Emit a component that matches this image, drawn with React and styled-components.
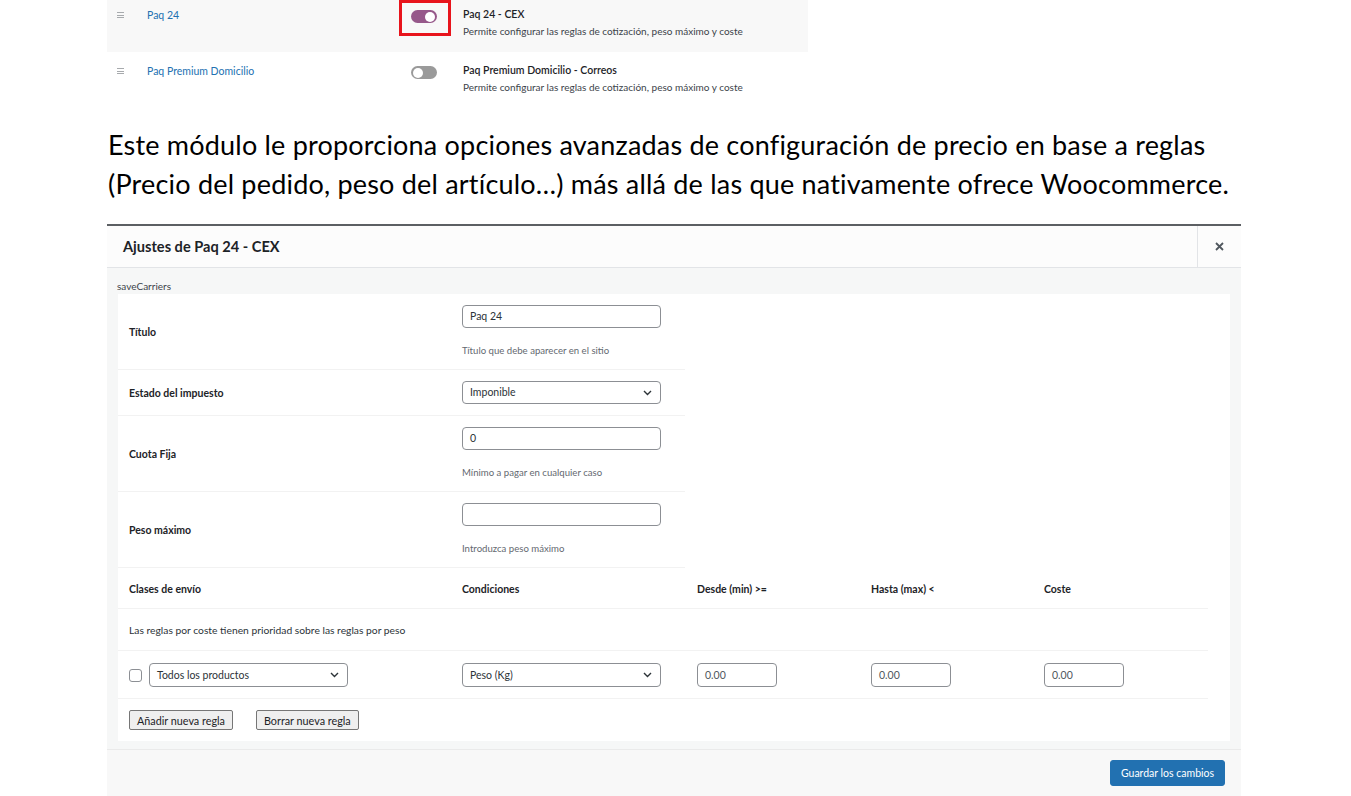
import React from "react";
import styled, { createGlobalStyle } from "styled-components";

const Global = createGlobalStyle`
  html, body { margin: 0; padding: 0; background: #ffffff; }
  body { font-family: Lato, "Open Sans", sans-serif; color: #1d2327; }
  * { box-sizing: border-box; }
`;

const Page = styled.div`
  width: 1351px;
  height: 796px;
  overflow: hidden;
  padding-left: 107px;
`;

const MethodList = styled.div`
  width: 701px;
  display: flex;
  flex-direction: column;
`;

const MethodRow = styled.div`
  display: grid;
  grid-template-columns: 40px 252px 64px 1fr;
  height: ${(p) => p.$h}px;
  background: ${(p) => (p.$alt ? "#f8f8f8" : "#ffffff")};
`;

const Handle = styled.div`
  display: flex;
  flex-direction: column;
  gap: 1.5px;
  padding: ${(p) => p.$pt}px 0 0 10px;
  span {
    display: block;
    width: 7px;
    height: 1px;
    background: #a7aaad;
  }
`;

const MethodLink = styled.a`
  font-size: 10.5px;
  color: #2271b1;
  text-decoration: none;
  line-height: 14px;
  padding-top: ${(p) => p.$pt}px;
`;

const ToggleCell = styled.div`
  position: relative;
  height: 36px;
`;

const Highlight = styled.div`
  position: absolute;
  left: 0;
  top: 0;
  width: 52px;
  height: 36px;
  border: 3px solid #e8141c;
`;

const Toggle = styled.div`
  position: absolute;
  left: 12px;
  top: ${(p) => p.$top}px;
  width: 26px;
  height: 13px;
  border-radius: 7px;
  background: ${(p) => (p.$on ? "#96588a" : "#9a9a9a")};
  &::after {
    content: "";
    position: absolute;
    top: 1.5px;
    ${(p) => (p.$on ? "right: 2px;" : "left: 1.5px;")}
    width: 10px;
    height: 10px;
    border-radius: 50%;
    background: #ffffff;
  }
`;

const MethodInfo = styled.div`
  display: flex;
  flex-direction: column;
  gap: 3px;
  padding-top: ${(p) => p.$pt}px;
`;

const MethodTitle = styled.div`
  font-size: 10.5px;
  font-weight: 600;
  color: #1d2327;
  line-height: 14px;
`;

const MethodDesc = styled.div`
  font-size: 10px;
  color: #3c434a;
  line-height: 14px;
`;

const Intro = styled.p`
  margin: 20px 0 0 1px;
  font-family: Lato, "Open Sans", sans-serif;
  font-size: 27px;
  line-height: 39px;
  color: #000000;
  letter-spacing: 0.2px;
  white-space: nowrap;
`;

const Modal = styled.div`
  margin-top: 21px;
  width: 1134px;
  border-top: 2px solid #5c5f63;
  background: #f6f7f7;
`;

const ModalHeader = styled.div`
  display: flex;
  height: 42px;
  background: #fcfcfc;
  border-bottom: 1px solid #e2e4e7;
`;

const ModalTitle = styled.h2`
  flex: 1;
  margin: 0;
  padding-left: 16px;
  font-size: 14.6px;
  font-weight: 700;
  line-height: 42px;
  color: #1d2327;
`;

const CloseButton = styled.div`
  width: 44px;
  border-left: 1px solid #e2e4e7;
  display: flex;
  align-items: center;
  justify-content: center;
`;

const ModalBody = styled.div`
  padding: 11px 11px 8px 11px;
`;

const FormName = styled.div`
  font-size: 10px;
  color: #3c434a;
  line-height: 15px;
  margin-left: -1px;
`;

const Panel = styled.div`
  background: #ffffff;
  display: flex;
  flex-direction: column;
`;

const FieldRow = styled.div`
  width: 567px;
  display: grid;
  grid-template-columns: 344px 1fr;
  border-bottom: 1px solid #f2f2f2;
`;

const FieldLabel = styled.div`
  display: flex;
  align-items: center;
  padding-left: 11px;
  font-size: 10.5px;
  font-weight: 700;
  color: #1d2327;
`;

const FieldControl = styled.div`
  padding: ${(p) => (p.$desc ? "11px 0 12px" : "11px 0 11px")};
`;

const TextInput = styled.div`
  width: ${(p) => p.$w || 199}px;
  height: ${(p) => p.$h || 23}px;
  border: 1px solid #8c8f94;
  border-radius: 4px;
  padding-left: 7px;
  font-size: 10.5px;
  line-height: ${(p) => (p.$h || 23) - 2}px;
  color: ${(p) => p.$c || "#2c3338"};
  background: #ffffff;
`;

const Select = styled(TextInput)`
  display: flex;
  align-items: center;
  justify-content: space-between;
  padding-right: 8px;
`;

const FieldDesc = styled.div`
  margin-top: 17px;
  font-size: 9.6px;
  line-height: 12px;
  color: #646970;
`;

const RulesGrid = styled.div`
  width: 1090px;
  display: grid;
  grid-template-columns: 344px 235px 174px 173px 164px;
`;

const RulesRow = styled.div`
  display: contents;
`;

const Cell = styled.div`
  height: ${(p) => p.$h}px;
  display: flex;
  align-items: center;
  gap: 7px;
  padding-left: ${(p) => (p.$first ? 11 : 0)}px;
  padding-top: ${(p) => p.$pt || 0}px;
  border-bottom: ${(p) => (p.$line ? "1px solid #f2f2f2" : "none")};
  grid-column: ${(p) => p.$span || "auto"};
`;

const HeadText = styled.span`
  font-size: 10.5px;
  font-weight: 700;
  color: #1d2327;
`;

const NoteText = styled.span`
  font-size: 10.3px;
  color: #2c3338;
`;

const Checkbox = styled.span`
  width: 13px;
  height: 13px;
  border: 1px solid #8c8f94;
  border-radius: 3px;
  background: #fff;
  flex-shrink: 0;
`;

const ButtonRow = styled.div`
  display: flex;
  gap: 23px;
  padding: 11px 0 10px 11px;
  height: 42px;
`;

const PlainButton = styled.button`
  height: 20px;
  padding: 0 7px;
  font-family: Lato, "Open Sans", sans-serif;
  font-size: 10.8px;
  color: #1d2327;
  background: #efefef;
  border: 1px solid #767676;
  border-radius: 2px;
`;

const ModalFooter = styled.div`
  display: flex;
  justify-content: flex-end;
  padding: 10px 16px 0 0;
  height: 50px;
  background: #f8f8f8;
  border-top: 1px solid #eaeaea;
`;

const PrimaryButton = styled.button`
  width: 115px;
  height: 26px;
  font-family: Lato, "Open Sans", sans-serif;
  font-size: 10.5px;
  color: #ffffff;
  background: #2271b1;
  border: 1px solid #2271b1;
  border-radius: 3px;
`;

const Chevron = () => (
  <svg width="9" height="6" viewBox="0 0 9 6">
    <path d="M1 1 L4.5 4.5 L8 1" fill="none" stroke="#2c3338" strokeWidth="1.4" />
  </svg>
);

const CloseIcon = () => (
  <svg width="9" height="9" viewBox="0 0 9 9">
    <path d="M1 1 L8 8 M8 1 L1 8" stroke="#50575e" strokeWidth="1.8" />
  </svg>
);

const HandleIcon = ({ pt }) => (
  <Handle $pt={pt}>
    <span />
    <span />
    <span />
  </Handle>
);

const fields = [
  { label: "Título", value: "Paq 24", desc: "Título que debe aparecer en el sitio" },
  { label: "Estado del impuesto", value: "Imponible", select: true },
  { label: "Cuota Fija", value: "0", desc: "Mínimo a pagar en cualquier caso" },
  { label: "Peso máximo", value: "", desc: "Introduzca peso máximo" },
];

export default function App() {
  return (
    <>
      <Global />
      <Page>
        <MethodList>
          <MethodRow $alt $h={52}>
            <HandleIcon pt={12} />
            <MethodLink $pt={8}>Paq 24</MethodLink>
            <ToggleCell>
              <Highlight />
              <Toggle $on $top={10} />
            </ToggleCell>
            <MethodInfo $pt={7}>
              <MethodTitle>Paq 24 - CEX</MethodTitle>
              <MethodDesc>Permite configurar las reglas de cotización, peso máximo y coste</MethodDesc>
            </MethodInfo>
          </MethodRow>
          <MethodRow $h={53}>
            <HandleIcon pt={16} />
            <MethodLink $pt={12}>Paq Premium Domicilio</MethodLink>
            <ToggleCell>
              <Toggle $top={14} />
            </ToggleCell>
            <MethodInfo $pt={11}>
              <MethodTitle>Paq Premium Domicilio - Correos</MethodTitle>
              <MethodDesc>Permite configurar las reglas de cotización, peso máximo y coste</MethodDesc>
            </MethodInfo>
          </MethodRow>
        </MethodList>

        <Intro>
          Este módulo le proporciona opciones avanzadas de configuración de precio en base a reglas
          <br />
          (Precio del pedido, peso del artículo…) más allá de las que nativamente ofrece Woocommerce.
        </Intro>

        <Modal>
          <ModalHeader>
            <ModalTitle>Ajustes de Paq 24 - CEX</ModalTitle>
            <CloseButton>
              <CloseIcon />
            </CloseButton>
          </ModalHeader>
          <ModalBody>
            <FormName>saveCarriers</FormName>
            <Panel>
              {fields.map((f) => (
                <FieldRow key={f.label}>
                  <FieldLabel>{f.label}</FieldLabel>
                  <FieldControl $desc={!!f.desc}>
                    {f.select ? (
                      <Select>
                        {f.value}
                        <Chevron />
                      </Select>
                    ) : (
                      <TextInput>{f.value}</TextInput>
                    )}
                    {f.desc && <FieldDesc>{f.desc}</FieldDesc>}
                  </FieldControl>
                </FieldRow>
              ))}
              <RulesGrid>
                <RulesRow>
                  <Cell $h={41} $pt={2} $first $line><HeadText>Clases de envío</HeadText></Cell>
                  <Cell $h={41} $pt={2} $line><HeadText>Condiciones</HeadText></Cell>
                  <Cell $h={41} $pt={2} $line><HeadText>Desde (min) &gt;=</HeadText></Cell>
                  <Cell $h={41} $pt={2} $line><HeadText>Hasta (max) &lt;</HeadText></Cell>
                  <Cell $h={41} $pt={2} $line><HeadText>Coste</HeadText></Cell>
                </RulesRow>
                <Cell $h={42} $pt={1} $first $line $span="1 / -1">
                  <NoteText>Las reglas por coste tienen prioridad sobre las reglas por peso</NoteText>
                </Cell>
                <RulesRow>
                  <Cell $h={48} $pt={1} $first $line>
                    <Checkbox />
                    <Select $h={24}>
                      Todos los productos
                      <Chevron />
                    </Select>
                  </Cell>
                  <Cell $h={48} $pt={1} $line>
                    <Select $h={24}>
                      Peso (Kg)
                      <Chevron />
                    </Select>
                  </Cell>
                  <Cell $h={48} $pt={1} $line><TextInput $w={80} $h={24} $c="#50575e">0.00</TextInput></Cell>
                  <Cell $h={48} $pt={1} $line><TextInput $w={80} $h={24} $c="#50575e">0.00</TextInput></Cell>
                  <Cell $h={48} $pt={1} $line><TextInput $w={80} $h={24} $c="#50575e">0.00</TextInput></Cell>
                </RulesRow>
              </RulesGrid>
              <ButtonRow>
                <PlainButton>Añadir nueva regla</PlainButton>
                <PlainButton>Borrar nueva regla</PlainButton>
              </ButtonRow>
            </Panel>
          </ModalBody>
          <ModalFooter>
            <PrimaryButton>Guardar los cambios</PrimaryButton>
          </ModalFooter>
        </Modal>
      </Page>
    </>
  );
}
